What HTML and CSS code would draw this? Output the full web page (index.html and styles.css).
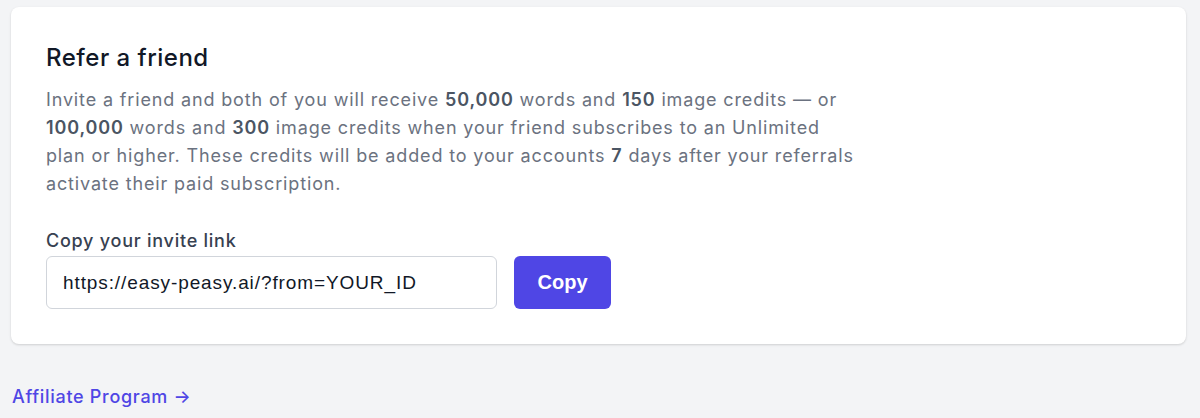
FILE: index.html
```html
<!DOCTYPE html>
<html>
<head>
<meta charset="utf-8">
<meta name="viewport" content="width=device-width, initial-scale=1">
<title>Refer a friend</title>
<link rel="stylesheet" href="styles.css">
</head>
<body>
    <div class="page">
        <div class="card">
            <h2 class="title">Refer a friend</h2>
            <p class="desc">
                Invite a friend and both of you will receive <b>50,000</b> words and <b>150</b> image credits &mdash; or
                <b>100,000</b> words and <b>300</b> image credits when your friend subscribes to an Unlimited
                plan or higher. These credits will be added to your accounts <b>7</b> days after your referrals
                activate their paid subscription.
            </p>

            <label class="label" for="inviteLink">Copy your invite link</label>
            <div class="invite-row">
                <input class="invite-input" id="inviteLink" type="text" value="https://easy-peasy.ai/?from=YOUR_ID" readonly>
                <button class="btn">Copy</button>
            </div>
        </div>

        <a class="affiliate" href="#">Affiliate Program &rarr;</a>
    </div>
</body>
</html>
```

FILE: styles.css
```css
html {
  background-color: #f3f4f6;
}

body {
  margin: 0;
  font-family: Inter, "Noto Sans", sans-serif;
  color: #111827;
}

.page {
  padding: 7px 14px 0 11px;
}

.card {
  background-color: #ffffff;
  border-radius: 8px;
  box-shadow: 0 1px 3px rgba(0, 0, 0, 0.1), 0 1px 2px rgba(0, 0, 0, 0.06);
  padding: 35px 35px 35px 35px;
}

.title {
  margin: 0;
  font-size: 24px;
  line-height: 32px;
  font-weight: 500;
  letter-spacing: 0.5px;
  color: #111827;
}

.desc {
  margin: 12px 0 0 0;
  max-width: 810px;
  font-size: 18px;
  line-height: 28px;
  letter-spacing: 0.85px;
  color: #6b7280;
}

.desc b {
  font-weight: 600;
  color: #4b5563;
}

.label {
  display: block;
  margin: 29px 0 1px 0;
  font-size: 18px;
  line-height: 28px;
  font-weight: 500;
  letter-spacing: 0.75px;
  color: #374151;
}

.invite-row {
  display: flex;
  gap: 17px;
}

.invite-input {
  box-sizing: border-box;
  width: 451px;
  height: 53px;
  padding: 0 16px;
  border: 1px solid #d1d5db;
  border-radius: 6px;
  font-family: "Liberation Sans", Arial, sans-serif;
  font-size: 19px;
  letter-spacing: 0.9px;
  color: #111827;
  outline: none;
}

.btn {
  width: 97px;
  height: 53px;
  border: none;
  border-radius: 6px;
  background-color: #4f46e5;
  color: #ffffff;
  font-family: "Liberation Sans", Arial, sans-serif;
  font-size: 20px;
  font-weight: 600;
  cursor: pointer;
}

.affiliate {
  display: inline-block;
  margin: 39px 0 0 1px;
  font-size: 18px;
  line-height: 28px;
  font-weight: 500;
  letter-spacing: 0.7px;
  color: #4f46e5;
  text-decoration: none;
}
```
